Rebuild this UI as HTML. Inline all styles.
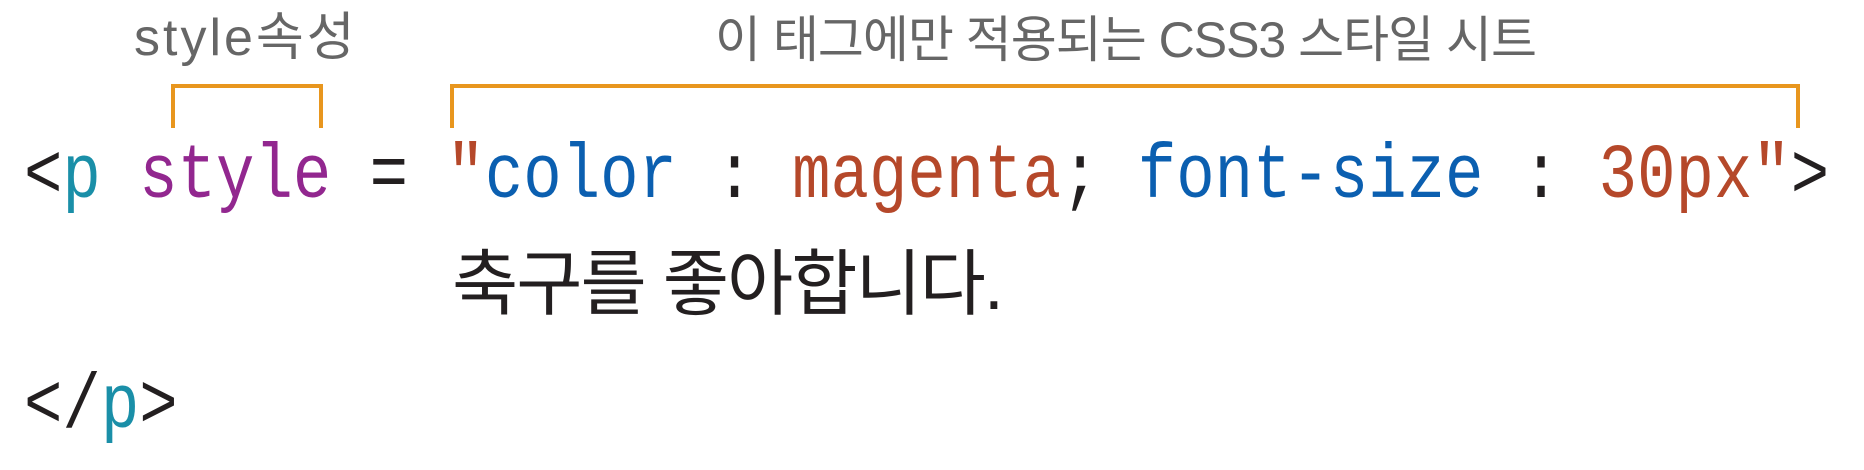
<!DOCTYPE html>
<html><head><meta charset="utf-8"><style>
html,body{margin:0;padding:0;background:#fff;width:1864px;height:470px;overflow:hidden;position:relative}
.m{position:absolute;font-family:"Liberation Mono",monospace;font-size:64px;line-height:64px;white-space:pre;color:#231f20;transform:scaleY(1.2);transform-origin:0 49px}
.k{position:absolute;font-family:"Liberation Sans","Noto Sans CJK KR",sans-serif;white-space:pre}
.b{position:absolute;border:4px solid #e8961e;border-bottom:none;height:44px;box-sizing:border-box}
.t{color:#1a8fa8}.pu{color:#92278f}.bl{color:#0b5fb0}.or{color:#b5482a}
</style></head><body>
<div class="k" style="left:134px;top:8px;font-size:52px;line-height:60px;color:#666;letter-spacing:3px">style속성</div>
<div class="k" style="left:704px;top:10px;font-size:50px;line-height:60px;color:#666;width:843px;text-align:center;letter-spacing:-1px">이 태그에만 적용되는 CSS3 스타일 시트</div>
<div class="b" style="left:171px;top:84px;width:152px"></div>
<div class="b" style="left:450px;top:84px;width:1350px"></div>
<div class="m" style="left:24px;top:149px">&lt;<span class="t">p</span> <span class="pu">style</span> = <span class="or">"</span><span class="bl">color</span> : <span class="or">magenta</span>; <span class="bl">font-size</span> : <span class="or">30px"</span>&gt;</div>
<div class="k" style="left:452px;top:249px;font-size:72px;line-height:72px;color:#231f20;letter-spacing:-2px">축구를 좋아합니다.</div>
<div class="m" style="left:24px;top:379px">&lt;/<span class="t">p</span>&gt;</div>
</body></html>
